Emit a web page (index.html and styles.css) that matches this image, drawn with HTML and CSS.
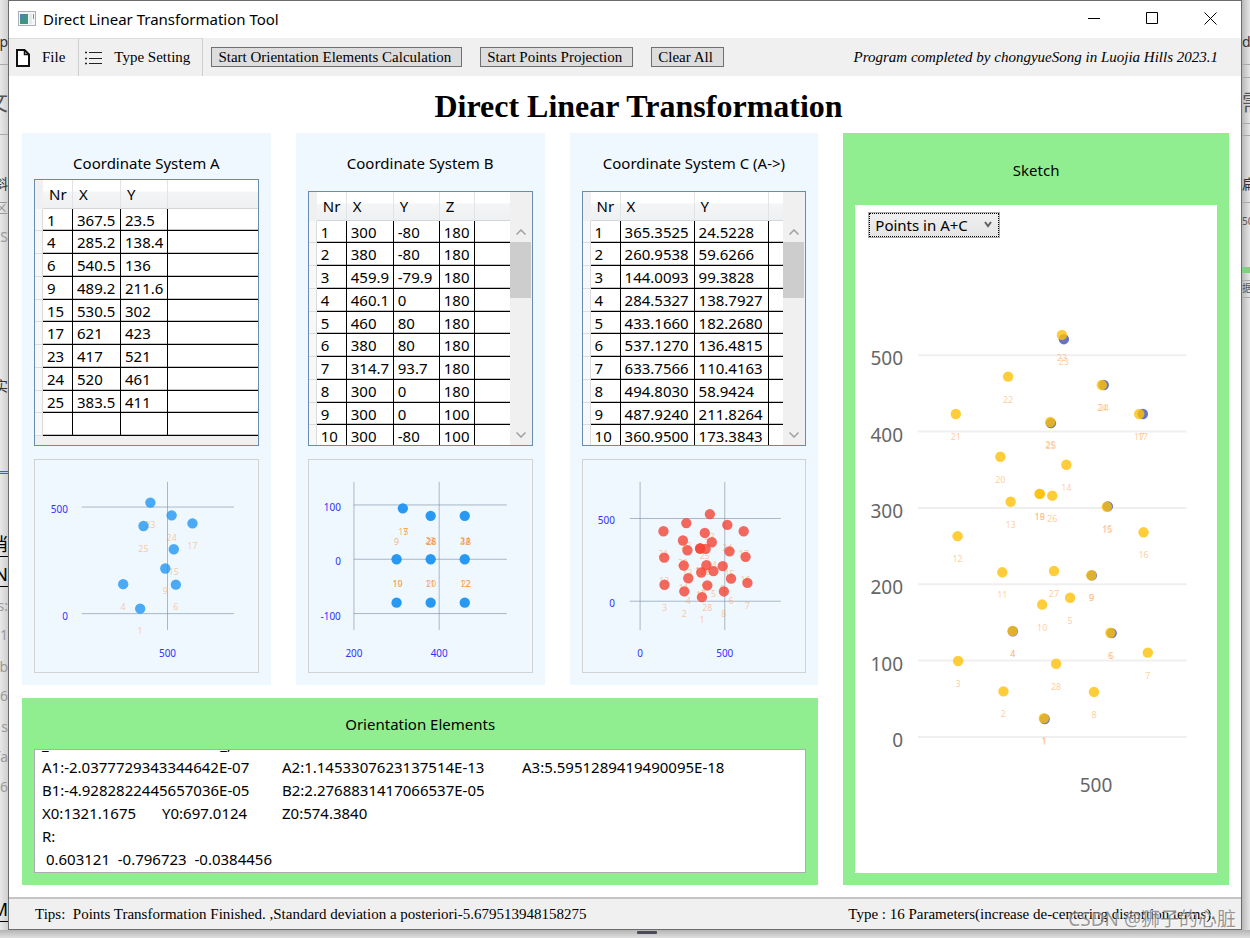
FILE: index.html
```html
<!DOCTYPE html>
<html lang="en">
<head>
<meta charset="utf-8">
<title>Direct Linear Transformation Tool</title>
<link rel="stylesheet" href="styles.css">
</head>
<body>
<div class="desktop">
  <div class="backdrop backdrop-left" aria-hidden="true">
    <span class="frag dark" style="top:32px">tcp</span>
    <i class="rule" style="top:64px"></i>
    <span class="frag big" style="top:86px">文</span>
    <i class="rule" style="top:134px"></i>
    <span class="frag dark" style="top:174px">斜</span>
    <span class="frag pale" style="top:198px">区</span>
    <span class="frag pale" style="top:227px">CS</span>
    <span class="frag dark" style="top:376px">实</span>
    <i class="rule blue" style="top:471px"></i>
    <span class="frag link" style="top:532px">消</span>
    <span class="frag link" style="top:562px">N</span>
    <span class="frag pale" style="top:596px">s:</span>
    <span class="frag pale" style="top:625px">=1</span>
    <span class="frag pale" style="top:657px">b</span>
    <span class="frag pale" style="top:686px">6</span>
    <span class="frag pale" style="top:717px">s</span>
    <span class="frag pale" style="top:747px">fa</span>
    <span class="frag pale" style="top:777px">6</span>
    <span class="frag link" style="top:897px">M</span>
  </div>

  <div class="window">
    <header class="titlebar">
      <svg class="app-icon" width="18" height="15" viewBox="0 0 18 15">
        <rect x="0.5" y="0.5" width="17" height="14" fill="#f4f6f7" stroke="#a9b0b6"/>
        <rect x="2" y="3" width="8" height="10" fill="#3f9482"/>
        <rect x="2" y="3" width="4" height="5" fill="#4a84b5"/>
        <rect x="11" y="3" width="3" height="10" fill="#e4e9ea"/>
        <rect x="15" y="3" width="1" height="5" fill="#52a98d"/>
      </svg>
      <span class="app-name">Direct Linear Transformation Tool</span>
      <div class="window-buttons">
        <button type="button" aria-label="Minimize"><svg width="13" height="13" viewBox="0 0 13 13"><path d="M0 6.5h12"/></svg></button>
        <button type="button" aria-label="Maximize"><svg width="13" height="13" viewBox="0 0 13 13"><path d="M.5.5h11v11h-11z"/></svg></button>
        <button type="button" aria-label="Close"><svg width="13" height="13" viewBox="0 0 13 13"><path d="M.5.5l12 12M12.5.5l-12 12"/></svg></button>
      </div>
    </header>

    <nav class="toolbar">
      <button type="button" class="menu-item menu-file">
        <svg width="14" height="18" viewBox="0 0 14 18"><path d="M1 1h7.500L13 5.500V17H1z" fill="#fff" stroke="#111" stroke-width="2"/><path d="M8.500 1v4.500H13" fill="none" stroke="#111" stroke-width="1.500"/></svg>
        <span>File</span>
      </button>
      <button type="button" class="menu-item menu-type">
        <svg width="17" height="14" viewBox="0 0 17 14"><path d="M4 1.500h13M4 7.500h13M4 12.500h13" stroke="#222" stroke-width="1.200"/><path d="M0 1.500h2M0 7.500h2M0 12.500h2" stroke="#222" stroke-width="1.500"/></svg>
        <span>Type Setting</span>
      </button>
      <div class="actions">
        <button type="button" class="action">Start Orientation Elements Calculation</button>
        <button type="button" class="action">Start Points Projection</button>
        <button type="button" class="action">Clear All</button>
      </div>
      <em class="credit">Program completed by chongyueSong in Luojia Hills 2023.1</em>
    </nav>

    <main class="content">
      <h1>Direct Linear Transformation</h1>
      <div class="panels">
        <section class="panel coords coords-a">
          <h2>Coordinate System A</h2>
          <div class="grid-box">
            <table>
              <colgroup><col class="c-handle"><col class="c-nr"><col class="c-48"><col class="c-47"><col></colgroup>
              <thead><tr><th></th><th>Nr</th><th>X</th><th>Y</th><th></th></tr></thead>
              <tbody>
                <tr><td></td><td>1</td><td>367.5</td><td>23.5</td><td></td></tr>
                <tr><td></td><td>4</td><td>285.2</td><td>138.4</td><td></td></tr>
                <tr><td></td><td>6</td><td>540.5</td><td>136</td><td></td></tr>
                <tr><td></td><td>9</td><td>489.2</td><td>211.6</td><td></td></tr>
                <tr><td></td><td>15</td><td>530.5</td><td>302</td><td></td></tr>
                <tr><td></td><td>17</td><td>621</td><td>423</td><td></td></tr>
                <tr><td></td><td>23</td><td>417</td><td>521</td><td></td></tr>
                <tr><td></td><td>24</td><td>520</td><td>461</td><td></td></tr>
                <tr><td></td><td>25</td><td>383.5</td><td>411</td><td></td></tr>
                <tr><td></td><td></td><td></td><td></td><td></td></tr>
              </tbody>
            </table>
          </div>
          <svg class="chart" id="chart-a" viewBox="0 0 224 213"></svg>
        </section>

        <section class="panel coords">
          <h2>Coordinate System B</h2>
          <div class="grid-box">
            <table>
              <colgroup><col class="c-handle"><col class="c-nr"><col class="c-47"><col class="c-46"><col class="c-35"><col></colgroup>
              <thead><tr><th></th><th>Nr</th><th>X</th><th>Y</th><th>Z</th><th></th></tr></thead>
              <tbody>
                <tr><td></td><td>1</td><td>300</td><td>-80</td><td>180</td><td></td></tr>
                <tr><td></td><td>2</td><td>380</td><td>-80</td><td>180</td><td></td></tr>
                <tr><td></td><td>3</td><td>459.9</td><td>-79.9</td><td>180</td><td></td></tr>
                <tr><td></td><td>4</td><td>460.1</td><td>0</td><td>180</td><td></td></tr>
                <tr><td></td><td>5</td><td>460</td><td>80</td><td>180</td><td></td></tr>
                <tr><td></td><td>6</td><td>380</td><td>80</td><td>180</td><td></td></tr>
                <tr><td></td><td>7</td><td>314.7</td><td>93.7</td><td>180</td><td></td></tr>
                <tr><td></td><td>8</td><td>300</td><td>0</td><td>180</td><td></td></tr>
                <tr><td></td><td>9</td><td>300</td><td>0</td><td>100</td><td></td></tr>
                <tr><td></td><td>10</td><td>300</td><td>-80</td><td>100</td><td></td></tr>
              </tbody>
            </table>
            <div class="scrollbar">
              <button type="button" aria-label="Scroll up"><svg width="10" height="6" viewBox="0 0 10 6"><path d="M.5 5.500L5 1l4.500 4.500"/></svg></button>
              <div class="thumb"></div>
              <button type="button" class="down" aria-label="Scroll down"><svg width="10" height="6" viewBox="0 0 10 6"><path d="M.5.5L5 5l4.500-4.500"/></svg></button>
            </div>
          </div>
          <svg class="chart" id="chart-b" viewBox="0 0 224 213"></svg>
        </section>

        <section class="panel coords">
          <h2>Coordinate System C (A-&gt;)</h2>
          <div class="grid-box">
            <table>
              <colgroup><col class="c-handle"><col class="c-nr"><col class="c-74"><col class="c-74"><col></colgroup>
              <thead><tr><th></th><th>Nr</th><th>X</th><th>Y</th><th></th></tr></thead>
              <tbody>
                <tr><td></td><td>1</td><td>365.3525</td><td>24.5228</td><td></td></tr>
                <tr><td></td><td>2</td><td>260.9538</td><td>59.6266</td><td></td></tr>
                <tr><td></td><td>3</td><td>144.0093</td><td>99.3828</td><td></td></tr>
                <tr><td></td><td>4</td><td>284.5327</td><td>138.7927</td><td></td></tr>
                <tr><td></td><td>5</td><td>433.1660</td><td>182.2680</td><td></td></tr>
                <tr><td></td><td>6</td><td>537.1270</td><td>136.4815</td><td></td></tr>
                <tr><td></td><td>7</td><td>633.7566</td><td>110.4163</td><td></td></tr>
                <tr><td></td><td>8</td><td>494.8030</td><td>58.9424</td><td></td></tr>
                <tr><td></td><td>9</td><td>487.9240</td><td>211.8264</td><td></td></tr>
                <tr><td></td><td>10</td><td>360.9500</td><td>173.3843</td><td></td></tr>
              </tbody>
            </table>
            <div class="scrollbar">
              <button type="button" aria-label="Scroll up"><svg width="10" height="6" viewBox="0 0 10 6"><path d="M.5 5.500L5 1l4.500 4.500"/></svg></button>
              <div class="thumb"></div>
              <button type="button" class="down" aria-label="Scroll down"><svg width="10" height="6" viewBox="0 0 10 6"><path d="M.5.5L5 5l4.500-4.500"/></svg></button>
            </div>
          </div>
          <svg class="chart" id="chart-c" viewBox="0 0 224 213"></svg>
        </section>

        <section class="panel green orientation">
          <h2><label for="elements">Orientation Elements</label></h2>
          <textarea id="elements" readonly spellcheck="false">_                                            _,
A1:-2.0377729343344642E-07&#9;A2:1.1453307623137514E-13&#9;A3:5.5951289419490095E-18
B1:-4.9282822445657036E-05&#9;B2:2.2768831417066537E-05
X0:1321.1675&#9;Y0:697.0124&#9;Z0:574.3840
R:
 0.603121  -0.796723  -0.0384456
</textarea>
        </section>

        <section class="panel green sketch">
          <h2>Sketch</h2>
          <div class="sketch-box">
            <div class="sketch-tools">
              <div class="combo">
                <select aria-label="Points shown"><option>Points in A+C</option></select>
                <svg width="8" height="7" viewBox="0 0 8 7"><path d="M1 1l3 4 3-4"/></svg>
              </div>
            </div>
            <svg class="sketch-chart" id="chart-sketch" viewBox="0 0 361 630"></svg>
          </div>
        </section>
      </div>
    </main>

    <footer class="statusbar">
      <span class="tips">Tips:&nbsp; Points Transformation Finished. ,Standard deviation a posteriori-5.679513948158275</span>
      <span>Type : 16 Parameters(increase de-centering distortion terms).</span>
    </footer>
  </div>

  <div class="backdrop backdrop-right" aria-hidden="true">
    <span class="frag dark" style="top:32px">dc</span>
    <i class="rule" style="top:64px"></i>
    <i class="rule" style="top:77px"></i>
    <span class="frag big" style="top:86px">需</span>
    <i class="rule" style="top:123px"></i>
    <i class="rule" style="top:135px"></i>
    <span class="frag dark" style="top:174px">扁</span>
    <i class="rule" style="top:202px"></i>
    <span class="frag small" style="top:214px">50</span>
    <i class="rule green-rule" style="top:267px"></i>
    <i class="rule" style="top:280px"></i>
    <span class="frag small" style="top:281px">据</span>
    <i class="rule" style="top:297px"></i>
  </div>
  <div class="backdrop backdrop-bottom" aria-hidden="true"><i class="handle"></i></div>
  <div class="watermark">CSDN @狮子的心脏</div>
</div>
<script src="charts.js"></script>
</body>
</html>
```
FILE: styles.css
```css
* { box-sizing: border-box; }

body {
  margin: 0;
  font-family: "Noto Sans", "Noto Sans CJK SC", sans-serif;
  font-size: 15px;
  color: #000;
  background: #dedede;
}

button, select, textarea { font: inherit; color: inherit; margin: 0; }

.desktop {
  position: relative;
  display: grid;
  grid-template-columns: 8px minmax(0, 1fr) 8px;
  grid-template-rows: 1fr 8px;
  min-height: 100vh;
}

/* Whatever lies behind the window */
.backdrop { position: relative; overflow: hidden; background: #dfdfdf; }
.backdrop-left { background: linear-gradient(to right, #e8e8e8, #cfcfcf); }
.backdrop-right { background: linear-gradient(to right, #b8b8b8, #e6e6e6); }
.backdrop-bottom {
  grid-column: 1 / -1;
  background: linear-gradient(to bottom, #b4b4b4, #dfdfdf);
  display: flex;
  justify-content: center;
}
.handle { width: 20px; height: 3px; margin: 1px 0 0 44px; background: #4b4a58; border-radius: 1px; }
.frag { position: absolute; right: 0; font-size: 14px; line-height: 20px; color: #555; white-space: nowrap; }
.backdrop-right .frag { right: auto; left: 0; }
.frag.dark { color: #333; }
.frag.big { font-size: 22px; line-height: 30px; }
.frag.small { font-size: 10px; line-height: 14px; }
.frag.pale { color: #9a9a9a; }
.frag.link { color: #000; font-size: 18px; line-height: 24px; border-bottom: 1px solid #000; }
.rule { position: absolute; left: 0; right: 0; height: 1px; background: #aaa; }
.rule.blue { height: 3px; background: #c3cdf5; border: solid #3c5be0; border-width: 1px 0; }
.rule.green-rule { height: 6px; background: #7fd07f; }

.window {
  display: flex;
  flex-direction: column;
  min-width: 0;
  background: #fff;
  border: 1px solid #6b6b6b;
}

.titlebar { display: flex; align-items: center; height: 37px; padding: 0 2px 2px 9px; }
.app-name { margin-left: 7px; }
.window-buttons { display: flex; margin-left: auto; }
.window-buttons button {
  display: flex;
  align-items: center;
  justify-content: center;
  width: 58px;
  height: 35px;
  padding: 0;
  border: 0;
  background: none;
}
.window-buttons svg { fill: none; stroke: #000; stroke-width: 1; }

.toolbar {
  display: flex;
  align-items: stretch;
  height: 38px;
  background: #f0f0f0;
  font-family: "Liberation Serif", serif;
  font-size: 15px;
}
.menu-item {
  display: flex;
  align-items: center;
  gap: 12px;
  padding: 0 12px 0 7px;
  border: 0;
  border-right: 1px solid #cfcfcf;
  border-top: 1px solid #dcdcdc;
  background: none;
}
.menu-file { padding-right: 13px; }
.menu-type { padding-left: 6px; }
.actions { display: flex; align-items: center; gap: 18px; margin-left: 8px; }
.action {
  height: 20px;
  padding: 0 10px 0 6px;
  line-height: 18px;
  border: 1px solid #707070;
  background: #ddd;
}
.credit { margin: auto 23px auto auto; }

.content { flex: 1; display: flex; flex-direction: column; padding: 0 12px 12px 13px; }
h1 {
  margin: 0;
  padding: 10px 0 7px 26px;
  font: bold 32px/40px "Liberation Serif", serif;
  text-align: center;
}
h2 { margin: 0; font-size: 15px; font-weight: normal; line-height: 24px; text-align: center; }

.panels {
  flex: 1;
  display: grid;
  grid-template-columns: 249fr 249fr 249fr 386fr;
  grid-template-rows: auto 1fr;
  gap: 13px 25px;
}
.panel { display: flex; flex-direction: column; min-width: 0; padding: 12px; background: #f0f8ff; }
.panel.green { background: #90ee90; }

.coords h2 { padding: 6px 0 16px; }
.coords-a h2 { padding-bottom: 4px; }

.grid-box {
  flex: 1 0 255px;
  height: 255px;
  display: flex;
  overflow: hidden;
  align-items: stretch;
  border: 1px solid #688caf;
  background: #f0f0f0;
}
table { flex: 1; align-self: flex-start; width: 0; border-collapse: separate; border-spacing: 0; table-layout: fixed; }
.c-handle { width: 8px; }
.c-nr { width: 30px; }
.c-35 { width: 35px; }
.c-46 { width: 46px; }
.c-47 { width: 47px; }
.c-48 { width: 48px; }
.c-74 { width: 74px; }
th {
  height: 29px;
  padding: 0 0 0 6px;
  font-weight: normal;
  text-align: left;
  border-right: 1px solid #e2e3e5;
  border-bottom: 1px solid #d5d5d5;
  background: linear-gradient(to bottom, #fff 40%, #f4f5f7 42%, #eff0f2);
}
th:first-child { padding: 0; background: #f0f0f0; border: 0; }
th:last-child { border-right: 0; }
td {
  height: 23px;
  padding: 0 0 0 4px;
  line-height: 20px;
  white-space: nowrap;
  background: #fff;
  border-right: 1px solid #000;
  border-bottom: 1px solid #000;
  box-shadow: inset 0 -1px 0 #c4c4c4;
}
tr:nth-child(4n+1) td { height: 22px; }
td:first-child { padding: 0; background: #f8f8f8; border-color: #dcdcdc; box-shadow: none; }
td:last-child { border-right: 0; }

.scrollbar { display: flex; flex-direction: column; width: 22px; padding-top: 29px; }
.scrollbar button {
  display: flex;
  align-items: center;
  justify-content: center;
  height: 21px;
  padding: 0;
  border: 0;
  background: none;
}
.scrollbar .down { margin-top: auto; }
.scrollbar svg { fill: none; stroke: #a0a0a0; stroke-width: 1.5; }
.thumb { height: 56px; margin-right: 1px; background: #cdcdcd; }

.chart { display: block; width: 100%; margin-top: 13px; border: 1px solid #d3d3d3; }

.orientation { grid-column: 1 / 4; }
.orientation h2 { padding: 2px 0 13px; }
.orientation textarea {
  flex: 1;
  min-height: 120px;
  padding: 2px 7px;
  border: 1px solid #abadb3;
  outline: 0;
  resize: none;
  overflow: hidden;
  background: #fff;
  line-height: 23px;
  tab-size: 120px;
  white-space: pre;
}

.sketch { grid-column: 4; grid-row: 1 / 3; }
.sketch h2 { padding: 13px 0 23px; }
.sketch-box { flex: 1; background: #fff; }
.sketch-tools { display: flex; padding: 7px 13px 2px; }
.combo { position: relative; border: 1px solid #acacac; }
.combo select {
  display: block;
  appearance: none;
  width: 130px;
  height: 24px;
  padding: 0 5px;
  border: 1px dotted #000;
  border-radius: 0;
  background: linear-gradient(to bottom, #f0f0f0, #e5e5e5);
}
.combo svg { position: absolute; right: 7px; top: 8px; fill: none; stroke: #606060; stroke-width: 2; pointer-events: none; }
.sketch-chart { display: block; width: 100%; }

/* Chart parts */
.grid-line { stroke: #7f93a8; stroke-opacity: .65; stroke-width: 1; }
.axis-label { font-size: 10px; fill: #3030ff; }
.point-label { font-size: 9px; fill: #ff9a3c; fill-opacity: .5; text-anchor: middle; }
#chart-b .point-label { fill: #f78a1e; fill-opacity: .65; }
.end { text-anchor: end; }
.middle { text-anchor: middle; }
.blue-dot { fill: #2196f3; fill-opacity: .8; }
.solid-dot { fill: #2196f3; fill-opacity: .97; }
.red-dot { fill: #f44336; fill-opacity: .8; }
.indigo-dot { fill: #3f51b5; fill-opacity: .8; }
.amber-dot { fill: #ffc107; fill-opacity: .8; }
.sketch-chart .grid-line { stroke: #efefef; stroke-opacity: 1; stroke-width: 2; }
.sketch-chart .axis-label { font-size: 19px; fill: #666; }

.statusbar {
  display: flex;
  justify-content: space-between;
  align-items: center;
  height: 32px;
  padding: 0 26px;
  border-top: 2px solid #c4c4c4;
  background: #f0f0f0;
  font-family: "Liberation Serif", serif;
  font-size: 15px;
}

.watermark {
  position: absolute;
  right: 14px;
  bottom: 5px;
  font-size: 19px;
  line-height: 28px;
  color: rgba(120, 120, 120, .75);
  text-shadow: 1px 1px 0 rgba(255, 255, 255, .6);
  white-space: nowrap;
}
```
FILE: charts.js
```js
const pointsA = [
  ["1", 367.5, 23.5], ["4", 285.2, 138.4], ["6", 540.5, 136], ["9", 489.2, 211.6],
  ["15", 530.5, 302], ["17", 621, 423], ["23", 417, 521], ["24", 520, 461], ["25", 383.5, 411]
];

const pointsB = [
  ["", 300, -80], ["", 380, -80], ["", 460, -80], ["", 300, 0], ["", 380, 0],
  ["", 460, 0], ["", 314.7, 93.7], ["", 380, 80], ["", 460, 80]
];

const pointsC = [
  ["1", 365.35, 24.52], ["2", 260.95, 59.63], ["3", 144.01, 99.38], ["4", 284.53, 138.79],
  ["5", 433.17, 182.27], ["6", 537.13, 136.48], ["7", 633.76, 110.42], ["8", 494.8, 58.94],
  ["9", 487.92, 211.83], ["10", 360.95, 173.38], ["11", 258, 215.6], ["12", 142.5, 263],
  ["13", 279.5, 308], ["14", 423.5, 356.5], ["15", 528, 301.4], ["16", 622.8, 268],
  ["17", 611.6, 423], ["18", 354.6, 318.4], ["19", 354.6, 318.4], ["20", 253, 367],
  ["21", 138, 423], ["22", 273, 472], ["23", 412, 526.6], ["24", 515, 461],
  ["25", 382, 412.5], ["26", 387, 316], ["27", 391.6, 217.4], ["28", 397, 95.8]
];

function add(svg, name, attrs, text) {
  const el = document.createElementNS("http://www.w3.org/2000/svg", name);
  for (const key in attrs) el.setAttribute(key, attrs[key]);
  if (text !== undefined) el.textContent = text;
  svg.appendChild(el);
}

function drawChart(id, c) {
  const svg = document.getElementById(id);
  const sx = v => c.x0 + v * c.kx;
  const sy = v => c.y0 - v * c.ky;

  for (const v of c.yTicks) {
    add(svg, "line", { class: "grid-line", x1: c.left, x2: c.right, y1: sy(v), y2: sy(v) });
    add(svg, "text", { class: "axis-label end", x: c.labelRight, y: sy(v) + c.labelDrop }, v);
  }
  for (const v of c.xTicks) {
    if (c.top !== undefined) {
      add(svg, "line", { class: "grid-line", x1: sx(v), x2: sx(v), y1: c.top, y2: c.bottom });
    }
    add(svg, "text", { class: "axis-label middle", x: sx(v), y: c.labelBottom }, v);
  }
  for (const s of c.series) {
    for (const [name, x, y] of s.points) {
      if (name) add(svg, "text", { class: "point-label", x: sx(x), y: sy(y) + 26 }, name);
    }
  }
  for (const [name, x, y] of c.notes || []) {
    add(svg, "text", { class: "point-label", x: x, y: y }, name);
  }
  for (const s of c.series) {
    for (const [, x, y] of s.points) {
      add(svg, "circle", { class: s.dot, cx: sx(x), cy: sy(y), r: 5.2 });
    }
  }
}

drawChart("chart-a", {
  x0: 29.5, kx: 0.2075, y0: 154.5, ky: 0.2144,
  left: 47, right: 200, top: 22, bottom: 171,
  xTicks: [500], yTicks: [0, 500],
  labelRight: 33, labelDrop: 6, labelBottom: 198,
  series: [{ points: pointsA, dot: "blue-dot" }]
});

drawChart("chart-b", {
  x0: -40.5, kx: 0.4285, y0: 99.8, ky: 0.546,
  left: 45, right: 199, top: 22, bottom: 171,
  xTicks: [200, 400], yTicks: [-100, 0, 100],
  labelRight: 32, labelDrop: 6, labelBottom: 198,
  notes: [
    ["15", 95, 75], ["7", 97, 75], ["9", 88, 85],
    ["23", 122, 84], ["26", 123, 85], ["28", 123, 85], ["24", 157, 84], ["18", 158, 85], ["32", 157, 85],
    ["10", 89, 128], ["19", 89, 128], ["20", 123, 128], ["11", 122, 128], ["12", 157, 128], ["22", 158, 128]
  ],
  series: [{ points: pointsB, dot: "solid-dot" }]
});

drawChart("chart-c", {
  x0: 57.4, kx: 0.1703, y0: 142, ky: 0.1664,
  left: 47, right: 199, top: 22, bottom: 171,
  xTicks: [0, 500], yTicks: [0, 500],
  labelRight: 32, labelDrop: 6, labelBottom: 198,
  series: [{ points: pointsC, dot: "red-dot" }]
});

drawChart("chart-sketch", {
  x0: 47.3, kx: 0.3865, y0: 496, ky: 0.762,
  left: 63, right: 331,
  xTicks: [500], yTicks: [0, 100, 200, 300, 400, 500],
  labelRight: 48, labelDrop: 10, labelBottom: 551,
  series: [{ points: pointsA, dot: "indigo-dot" }, { points: pointsC, dot: "amber-dot" }]
});

document.getElementById("elements").scrollTop = 19;
```
